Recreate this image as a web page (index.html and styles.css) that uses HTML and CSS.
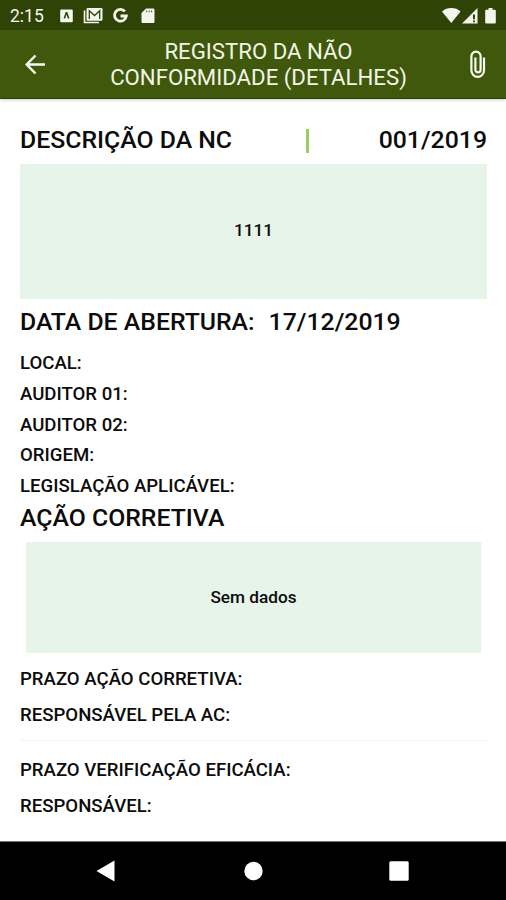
FILE: index.html
```
<!DOCTYPE html>
<html lang="pt-BR">
<head>
  <meta charset="UTF-8">
  <title>Registro da Não Conformidade</title>
  <meta name="viewport" content="width=device-width, initial-scale=1.0">
  <link rel="stylesheet" href="styles.css">
</head>
<body>

<div class="screen">
  <div class="status-bar">
    <span class="clock">2:15</span>
    <svg class="status-left" width="96" height="18" viewBox="0 0 96 18" fill="#f4f6ee">
      <!-- keyboard app -->
      <path fill-rule="evenodd" d="M1.2 2.6h10.6a1 1 0 0 1 1 1v10.6a1 1 0 0 1-1 1H1.2a1 1 0 0 1-1-1V3.600a1 1 0 0 1 1-1zM5.700 5 3.500 11.500h1.700L6.500 7.500l1.300 4h1.700L7.300 5z"/>
      <!-- mail -->
      <path d="M24.500 3.500v12H39" fill="none" stroke="#f4f6ee" stroke-width="1.600"/>
      <rect x="26.500" y="1" width="16" height="12.800" rx="1.300"/>
      <path d="M29.300 12V3.800l5.200 4.700 5.200-4.700V12" fill="none" stroke="#2f4307" stroke-width="1.300"/>
      <!-- google -->
      <path d="M64.900 4.400A5.900 5.900 0 1 0 66.300 9H60.500" fill="none" stroke="#f4f6ee" stroke-width="2.800"/>
      <!-- sd card -->
      <path fill-rule="evenodd" d="M86 1.500h7.200a1.300 1.300 0 0 1 1.300 1.300v11.900a1.300 1.300 0 0 1-1.300 1.300H82.800a1.300 1.300 0 0 1-1.300-1.300V6zM86.200 3.500v1.700h.9V3.500zm2.500 0v1.700h.9V3.500zM91.200 3.500v1.700h.9V3.500z"/>
    </svg>
    <svg class="status-right" width="56" height="18" viewBox="0 0 56 18" fill="#f4f6ee">
      <path d="M0 4.500C5-.1 13.600-.1 18.600 4.500L9.300 16z"/>
      <path fill-rule="evenodd" d="M20 16.500 35.500 1v15.500zM31 7.500v4.800h2V7.500zM31 13.600v1.700h2v-1.700z"/>
      <path d="M46.500 1h4v1.700h2.300a1 1 0 0 1 1 1v11.800a1 1 0 0 1-1 1h-8.600a1 1 0 0 1-1-1V3.700a1 1 0 0 1 1-1h2.300z"/>
    </svg>
  </div>

  <div class="app-bar">
    <svg class="back" width="22" height="20" viewBox="0 0 22 20">
      <path d="M20 10.500H2M10.500 1.500 1.700 10.500l8.800 9"/>
    </svg>
    <h1 class="title">REGISTRO DA NÃO<br>CONFORMIDADE (DETALHES)</h1>
    <svg class="clip" width="16" height="29" viewBox="0 0 16 29">
      <path d="M14 7.500v13a6.300 6.300 0 0 1-12.600 0V6.300a4.600 4.600 0 0 1 9.200 0v13.500a2.600 2.600 0 0 1-5.200 0V7.500"/>
    </svg>
  </div>

  <div class="content">
    <div class="heading heading-row">
      <span>DESCRIÇÃO DA NC</span>
      <span class="separator"></span>
      <span>001/2019</span>
    </div>
    <div class="panel panel-nc">1111</div>

    <div class="heading opening">
      <span>DATA DE ABERTURA:</span>
      <span>17/12/2019</span>
    </div>
    <div class="details">
      <div>LOCAL:</div>
      <div>AUDITOR 01:</div>
      <div>AUDITOR 02:</div>
      <div>ORIGEM:</div>
      <div>LEGISLAÇÃO APLICÁVEL:</div>
    </div>

    <div class="heading action">AÇÃO CORRETIVA</div>
    <div class="panel panel-small">Sem dados</div>

    <div class="deadlines">
      <div>PRAZO AÇÃO CORRETIVA:</div>
      <div>RESPONSÁVEL PELA AC:</div>
    </div>
    <div class="deadlines verification">
      <div>PRAZO VERIFICAÇÃO EFICÁCIA:</div>
      <div>RESPONSÁVEL:</div>
    </div>
  </div>

  <div class="nav-bar">
    <svg width="20" height="22" viewBox="0 0 20 22"><path d="M18.500 .5v21L.5 11z"/></svg>
    <svg width="20" height="20" viewBox="0 0 20 20"><circle cx="10.500" cy="10" r="9.200"/></svg>
    <svg width="20" height="20" viewBox="0 0 20 20"><rect x=".3" y=".3" width="19.400" height="19.400" rx="1.500"/></svg>
  </div>
</div>

</body>
</html>
```
FILE: styles.css
```
* { margin: 0; padding: 0; box-sizing: border-box; }

body {
  font-family: Roboto, sans-serif;
  background: #fff;
  color: #0c0c0c;
  overflow: hidden;
}

.screen {
  display: flex;
  flex-direction: column;
  height: 900px;
  width: 506px;
}

.status-bar {
  display: flex;
  align-items: center;
  height: 30px;
  padding: 2px 8px 0 10px;
  background: #2f4307;
  color: #f4f6ee;
}

.clock { font-size: 17.5px; width: 50px; }
.status-right { margin-left: auto; }

.app-bar {
  display: flex;
  align-items: center;
  height: 69px;
  padding: 0 20px 0 25px;
  background: #40580b;
  border-bottom: 1px solid #2b4206;
  box-shadow: 0 1px 3px rgba(60, 40, 50, 0.25);
}

.back, .clip { fill: none; stroke: #f7faf0; }
.back { stroke-width: 2.5; }
.clip { stroke-width: 2.2; }

.title {
  flex: 1;
  font-size: 22.2px;
  font-weight: 400;
  line-height: 26px;
  text-align: center;
  color: #f1f5e8;
}

.content {
  flex: 1;
  padding: 26px 19px 0 20px;
  font-size: 18.6px;
  font-weight: 500;
}

.heading {
  font-size: 24.8px;
  line-height: 30px;
  white-space: nowrap;
}

.heading-row {
  display: flex;
  justify-content: space-between;
  align-items: center;
}

.separator {
  width: 3px;
  height: 24px;
  margin: 2px 0 0 4px;
  background: #9ccc65;
}

.panel {
  display: flex;
  align-items: center;
  justify-content: center;
  height: 135px;
  margin-top: 9px;
  background: #e7f4e9;
  font-size: 17.2px;
}

.panel-nc { padding-bottom: 4px; }

.opening { margin-top: 8px; display: flex; gap: 14px; }

.details { margin-top: 11px; line-height: 30.8px; }

.action { margin-top: 1px; }

.panel-small {
  height: 111px;
  margin: 9px 6px 0;
}

.deadlines {
  padding-top: 8px;
  line-height: 36px;
}

.verification {
  margin-top: 7px;
  padding-top: 11px;
  border-top: 1px solid #f4f4f4;
}

.nav-bar {
  display: flex;
  align-items: center;
  justify-content: space-between;
  height: 59px;
  padding: 0 97px 0 96px;
  background: #000;
  border-top: 1px solid #777;
  fill: #fff;
}
```
